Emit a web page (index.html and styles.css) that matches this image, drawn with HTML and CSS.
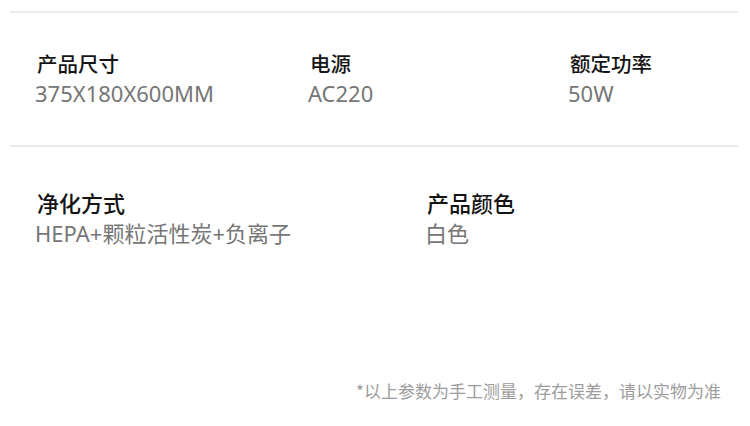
FILE: index.html
```html
<!DOCTYPE html>
<html lang="zh-CN">
<head>
    <meta charset="UTF-8">
    <meta name="viewport" content="width=device-width, initial-scale=1.0">
    <title>产品参数</title>
    <link rel="stylesheet" href="styles.css">
</head>
<body>

<div class="sheet">
    <div class="rule"></div>

    <div class="spec-row row-one">
        <div class="spec spec-size">
            <div class="spec-label">产品尺寸</div>
            <div class="spec-value">375X180X600MM</div>
        </div>
        <div class="spec spec-power">
            <div class="spec-label">电源</div>
            <div class="spec-value">AC220</div>
        </div>
        <div class="spec">
            <div class="spec-label">额定功率</div>
            <div class="spec-value">50W</div>
        </div>
    </div>

    <div class="rule"></div>

    <div class="spec-row row-two">
        <div class="spec spec-filter">
            <div class="spec-label">净化方式</div>
            <div class="spec-value">HEPA+颗粒活性炭+负离子</div>
        </div>
        <div class="spec">
            <div class="spec-label">产品颜色</div>
            <div class="spec-value">白色</div>
        </div>
    </div>

    <p class="note">*以上参数为手工测量，存在误差，请以实物为准</p>
</div>

</body>
</html>
```

FILE: styles.css
```css
body {
    margin: 0;
    background-color: #fff;
    font-family: "Noto Sans", "Noto Sans CJK SC", sans-serif;
}
.sheet {
    padding-top: 11px;
}
.rule {
    margin: 0 12px 0 10px;
    border-top: 2px solid #ebebeb;
}
.spec-row {
    display: flex;
    padding-left: 37px;
}
.row-one {
    padding-top: 35px;
    padding-bottom: 37px;
}
.row-two {
    padding-top: 40px;
}
.spec-size {
    width: 273px;
}
.spec-power {
    width: 260px;
}
.spec-filter {
    width: 390px;
}
.spec-label {
    font-family: "Noto Sans CJK SC", sans-serif;
    font-size: 20.5px;
    font-weight: 500;
    line-height: 30px;
    color: #141414;
}
.row-two .spec-label {
    font-size: 22px;
}
.spec-value {
    font-size: 22px;
    line-height: 30px;
    color: #767676;
    margin-left: -2px;
}
.row-two .spec-value {
    line-height: 32px;
}
.note {
    margin: 130px 29px 0 0;
    text-align: right;
    font-family: "Noto Sans CJK SC", sans-serif;
    font-size: 17px;
    line-height: 24px;
    color: #9c9c9c;
}
```
